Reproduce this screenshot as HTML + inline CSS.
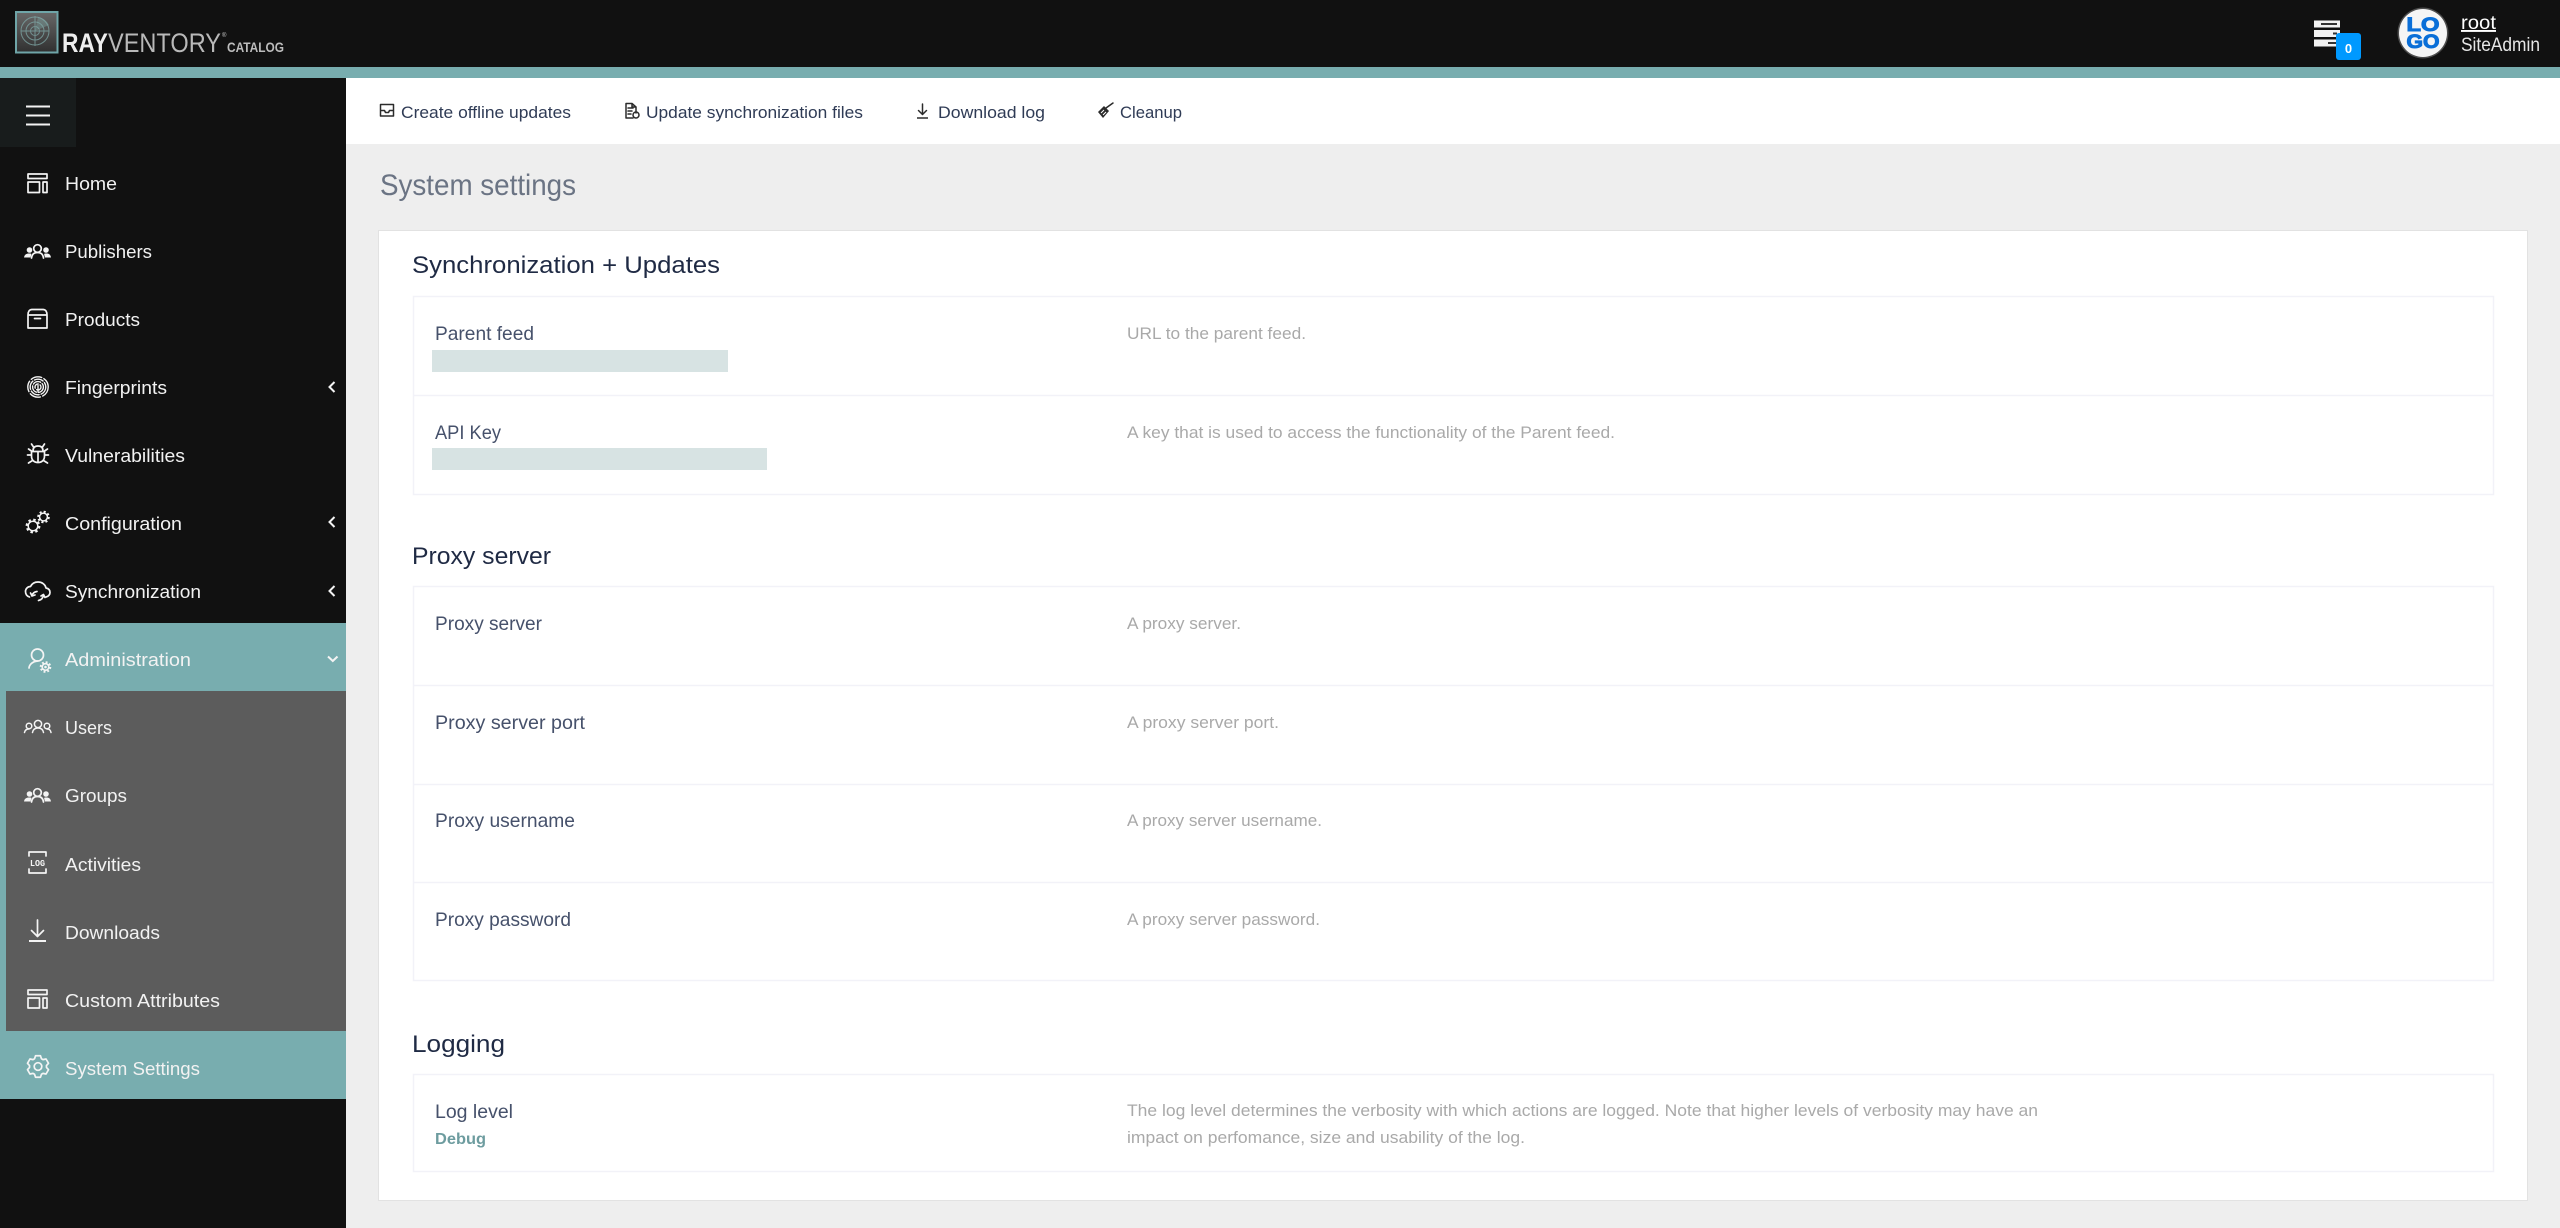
<!DOCTYPE html>
<html lang="en">
<head>
<meta charset="utf-8">
<title>System settings</title>
<style>
html,body{margin:0;padding:0;background:#eee;width:2560px;height:1228px;overflow:hidden}
svg{display:block}
text{font-family:"Liberation Sans",sans-serif}
.nav{font-size:18.5px;fill:#f2f2f2}
.tb{font-size:16.5px;fill:#2f3b55}
.h{font-size:24px;fill:#1f2a44}
.lb{font-size:19.5px;fill:#46516b}
.ds{font-size:16.5px;fill:#a9a9a9}
.ic{fill:none;stroke:#f4f4f4;stroke-width:1.7;stroke-linecap:round;stroke-linejoin:round}
.dk{fill:none;stroke:#2b2b2b;stroke-width:1.5;stroke-linecap:round;stroke-linejoin:round}
.box{fill:#fff;stroke:#f2f2f8;stroke-width:1.5}
.ln{stroke:#f2f2f8;stroke-width:1.5}
</style>
</head>
<body>
<svg xmlns="http://www.w3.org/2000/svg" width="2560" height="1228" viewBox="0 0 2560 1228">
<defs>
<path id="gear" vector-effect="non-scaling-stroke" d="M3.46 7.77L2.47 10.72L-2.47 10.72L-3.46 7.77L-5 6.88L-8.04 7.5L-10.52 3.22L-8.45 .89L-8.45 -.89L-10.52 -3.22L-8.04 -7.5L-5 -6.88L-3.46 -7.77L-2.47 -10.72L2.47 -10.72L3.46 -7.77L5 -6.88L8.04 -7.5L10.52 -3.22L8.45 -.89L8.45 .89L10.52 3.22L8.04 7.5L5 6.88Z"/>
<linearGradient id="lg" x1="0" y1="0" x2="0" y2="1"><stop offset="0" stop-color="#686868"/><stop offset="1" stop-color="#303030"/></linearGradient>
</defs>

<!-- backgrounds -->
<rect width="2560" height="1228" fill="#eeeeee"/>
<rect width="2560" height="67" fill="#111111"/>
<rect y="67" width="2560" height="11" fill="#78adaf"/>
<rect y="78" width="346" height="1150" fill="#111111"/>
<rect x="346" y="78" width="2214" height="66" fill="#ffffff"/>
<rect y="78" width="76" height="69" fill="#181c1c"/>
<rect y="623" width="346" height="68" fill="#78adaf"/>
<rect y="691" width="6" height="340" fill="#78adaf"/>
<rect x="6" y="691" width="340" height="340" fill="#5c5c5c"/>
<rect y="1031" width="346" height="68" fill="#78adaf"/>

<!-- logo -->
<rect x="16" y="12" width="41.500" height="40.500" fill="url(#lg)" stroke="#6fa5a8" stroke-width="2"/>
<g fill="none" stroke="#7fa9a8" stroke-width="1" opacity=".75">
<circle cx="35" cy="31" r="14"/><circle cx="35" cy="31" r="9"/><circle cx="35" cy="31" r="4.500"/>
<path d="M35 16V46M21 31H49"/>
</g>
<path d="M35 31L38 17A15 15 0 0 1 49 25Z" fill="#7fa9a8" opacity=".4"/>
<text x="62" y="52" font-size="27" font-weight="700" fill="#eeeeee" textLength="46" lengthAdjust="spacingAndGlyphs">RAY</text>
<text x="108" y="52" font-size="27" fill="#b9b9b9" textLength="113" lengthAdjust="spacingAndGlyphs">VENTORY</text>
<text x="222" y="37" font-size="6" fill="#cccccc">®</text>
<text x="227" y="52" font-size="13.500" font-weight="700" fill="#bdbdbd" textLength="57" lengthAdjust="spacingAndGlyphs">CATALOG</text>

<!-- hamburger -->
<path d="M26 106.500H50M26 115.500H50M26 124.500H50" stroke="#f4f4f4" stroke-width="2"/>

<!-- sidebar text -->
<text class="nav" x="65" y="190" textLength="52" lengthAdjust="spacingAndGlyphs">Home</text>
<text class="nav" x="65" y="258" textLength="87" lengthAdjust="spacingAndGlyphs">Publishers</text>
<text class="nav" x="65" y="326" textLength="75" lengthAdjust="spacingAndGlyphs">Products</text>
<text class="nav" x="65" y="394" textLength="102" lengthAdjust="spacingAndGlyphs">Fingerprints</text>
<text class="nav" x="65" y="462" textLength="120" lengthAdjust="spacingAndGlyphs">Vulnerabilities</text>
<text class="nav" x="65" y="530" textLength="117" lengthAdjust="spacingAndGlyphs">Configuration</text>
<text class="nav" x="65" y="598" textLength="136" lengthAdjust="spacingAndGlyphs">Synchronization</text>
<text class="nav" x="65" y="666" textLength="126" lengthAdjust="spacingAndGlyphs">Administration</text>
<text class="nav" x="65" y="734" textLength="47" lengthAdjust="spacingAndGlyphs">Users</text>
<text class="nav" x="65" y="802" textLength="62" lengthAdjust="spacingAndGlyphs">Groups</text>
<text class="nav" x="65" y="871" textLength="76" lengthAdjust="spacingAndGlyphs">Activities</text>
<text class="nav" x="65" y="939" textLength="95" lengthAdjust="spacingAndGlyphs">Downloads</text>
<text class="nav" x="65" y="1007" textLength="155" lengthAdjust="spacingAndGlyphs">Custom Attributes</text>
<text class="nav" x="65" y="1075" textLength="135" lengthAdjust="spacingAndGlyphs">System Settings</text>

<!-- chevrons -->
<path d="M334.500 382L329.500 387L334.500 392M334.500 517L329.500 522L334.500 527M334.500 586L329.500 591L334.500 596" fill="none" stroke="#f4f4f4" stroke-width="2"/>
<path d="M328 656.500L332.800 661L337.500 656.500" fill="none" stroke="#f4f4f4" stroke-width="2"/>

<!-- Home -->
<g class="ic">
<rect x="28" y="174" width="19" height="4.500"/><rect x="28" y="182" width="11.500" height="10.500"/><rect x="43" y="182" width="4" height="10.500"/>
</g>
<!-- Publishers -->
<g class="ic">
<circle cx="37.500" cy="248.500" r="3.800"/><path d="M31.500 258C32 254 34 252.500 37.500 252.500S43 254 43.500 258"/>
</g>
<g fill="#f4f4f4">
<circle cx="29.500" cy="250" r="2.800"/><path d="M24 257.500C24.500 254 27 253.500 29.500 253.500S31.500 254 30.500 257.500Z"/>
<circle cx="46" cy="250" r="2.800"/><path d="M51 257.500C50.500 254 48.500 253.500 46 253.500S44 254 45 257.500Z"/>
</g>
<!-- Products -->
<g class="ic">
<path d="M28 315V328H47V315C47 311.500 45.500 309.500 43 309.500H32C29.500 309.500 28 311.500 28 315ZM28 315H47M34.500 318.500H40.500"/>
</g>
<!-- Fingerprints -->
<g fill="none" stroke="#f4f4f4" stroke-width="1.400" stroke-linecap="round">
<circle cx="38" cy="387" r="10.200" stroke-dasharray="11 2.500"/>
<circle cx="38" cy="387" r="7.800" stroke-dasharray="9 2"/>
<circle cx="38" cy="387" r="5.400" stroke-dasharray="8 2"/>
<circle cx="38" cy="387" r="3" stroke-dasharray="6 2"/>
<path d="M38 385.500V392"/>
</g>
<!-- Vulnerabilities -->
<g class="ic">
<path d="M31.500 451.500H44.500V456C44.500 460 42 462.500 38 462.500S31.500 460 31.500 456ZM33 451C33 447.500 35 446 38 446S43 447.500 43 451M38 451.500V462.500M33.500 447L31.500 444M42.500 447L44.500 444M31.500 455H27.500M44.500 455H48.500M32.500 460.500L28.500 463M43.500 460.500L47.500 463M31.500 451L28.500 449M44.500 451L47.500 449"/>
</g>
<!-- Configuration -->
<g fill="none" stroke="#f4f4f4">
<circle cx="33" cy="526" r="4.800" stroke-width="1.500"/>
<circle cx="33" cy="526" r="6.300" stroke-width="2.200" stroke-dasharray="2.500 2.450"/>
<circle cx="43.500" cy="517" r="3.900" stroke-width="1.500"/>
<circle cx="43.500" cy="517" r="5.300" stroke-width="2" stroke-dasharray="2.100 2.060"/>
</g>
<!-- Synchronization -->
<g class="ic">
<path d="M29.500 597C26.500 596 25.500 593.500 25.500 591.500C25.500 588.500 28 586.500 30.500 586.500C32 583.500 35 582 38 582C42.500 582 45.500 585 46 588C48.500 588.500 50 590 50 592.500C50 594.500 48.500 596.500 46 597"/>
<path d="M32 595.500A6 6 0 0 1 37 591.500M30.500 593L32 596L35 595M43.500 595A6 6 0 0 1 38.500 600.500M45 597.500L43.500 594.500L41 596"/>
</g>
<!-- Administration -->
<g class="ic">
<circle cx="37.500" cy="655" r="6"/><path d="M29 668C29.500 664 33 661.500 37.500 661"/>
</g>
<g fill="none" stroke="#f4f4f4">
<circle cx="45.500" cy="667" r="3.300" stroke-width="1.600"/>
<circle cx="45.500" cy="667" r="4.800" stroke-width="2" stroke-dasharray="1.900 1.870"/>
</g>
<circle cx="45.500" cy="667" r="1.300" fill="#f4f4f4"/>
<!-- Users -->
<g fill="none" stroke="#f4f4f4" stroke-width="1.500" stroke-linecap="round">
<circle cx="38" cy="724" r="3.600"/><path d="M32.500 732.500C33 729.500 35 728 38 728S43 729.500 43.500 732.500"/>
<circle cx="29" cy="726" r="2.800"/><path d="M24.500 732.500C25 730 26.500 729 29 729"/>
<circle cx="47" cy="726" r="2.800"/><path d="M51 732.500C50.500 730 49.500 729 47 729"/>
</g>
<!-- Groups -->
<g class="ic">
<circle cx="37.500" cy="792.500" r="3.800"/><path d="M31.500 802C32 798 34 796.500 37.500 796.500S43 798 43.500 802"/>
</g>
<g fill="#f4f4f4">
<circle cx="29.500" cy="794" r="2.800"/><path d="M24 801.500C24.500 798 27 797.500 29.500 797.500S31.500 798 30.500 801.500Z"/>
<circle cx="46" cy="794" r="2.800"/><path d="M51 801.500C50.500 798 48.500 797.500 46 797.500S44 798 45 801.500Z"/>
</g>
<!-- Activities -->
<path class="ic" d="M29 856V852H46V856M29 869V873H46V869"/>
<text x="30" y="866" font-size="9" font-weight="700" fill="#f4f4f4" textLength="15" lengthAdjust="spacingAndGlyphs" style="font-family:'Liberation Mono',monospace">LOG</text>
<!-- Downloads -->
<path class="ic" d="M37.500 920V936M31.500 930.500L37.500 936.500L43.500 930.500"/>
<path d="M29 941H46" stroke="#f4f4f4" stroke-width="2"/>
<!-- Custom Attributes -->
<g class="ic">
<rect x="28" y="990" width="19" height="4.500"/><rect x="28" y="998" width="11.500" height="10"/><rect x="43" y="998" width="4" height="10"/>
</g>
<!-- System Settings -->
<g class="ic">
<use href="#gear" transform="translate(38 1066.500)"/>
<circle cx="38" cy="1066.500" r="3.800"/>
</g>

<!-- header right -->
<g>
<rect x="2314" y="20.500" width="26" height="7" fill="#f2f2f2"/><rect x="2321" y="23" width="16" height="2" fill="#333"/>
<rect x="2314" y="30" width="26" height="7" fill="#f2f2f2"/><rect x="2333" y="32.500" width="4" height="2" fill="#333"/>
<rect x="2314" y="39.500" width="26" height="7" fill="#f2f2f2"/><rect x="2328" y="42" width="9" height="2" fill="#333"/>
</g>
<rect x="2336" y="33" width="25" height="27" rx="3" fill="#0099ff"/>
<text x="2348.500" y="53" font-size="13" font-weight="700" fill="#fff" text-anchor="middle">0</text>
<circle cx="2423" cy="33" r="25.500" fill="#ffffff" opacity=".25"/>
<circle cx="2423" cy="33" r="24" fill="#f5f5f5"/>
<text x="2406.500" y="31" font-size="19.500" font-weight="700" fill="#0a6fd8" stroke="#0a6fd8" stroke-width="1" textLength="33" lengthAdjust="spacingAndGlyphs">LO</text>
<text x="2406.500" y="48" font-size="19.500" font-weight="700" fill="#0a6fd8" stroke="#0a6fd8" stroke-width="1" textLength="33" lengthAdjust="spacingAndGlyphs">GO</text>
<text x="2461" y="29" font-size="19" fill="#ffffff" text-decoration="underline" textLength="35" lengthAdjust="spacingAndGlyphs">root</text>
<text x="2461" y="51" font-size="19" fill="#e6e6e6" textLength="79" lengthAdjust="spacingAndGlyphs">SiteAdmin</text>

<!-- toolbar -->
<text class="tb" x="401" y="118" textLength="170" lengthAdjust="spacingAndGlyphs">Create offline updates</text>
<text class="tb" x="646" y="118" textLength="217" lengthAdjust="spacingAndGlyphs">Update synchronization files</text>
<text class="tb" x="938" y="118" textLength="107" lengthAdjust="spacingAndGlyphs">Download log</text>
<text class="tb" x="1120" y="118" textLength="62" lengthAdjust="spacingAndGlyphs">Cleanup</text>
<path class="dk" d="M380.500 104.500H393.500V116H380.500ZM380.500 110.500H384.500L385.500 112.500H388.500L389.500 110.500H393.500"/>
<path class="dk" d="M636 113V107L632 103.500H626V118H633M632 103.500V107H636M628 108H633M628 111H632M628 114H631"/>
<circle cx="636" cy="115" r="3" fill="none" stroke="#2b2b2b" stroke-width="1.500"/>
<path class="dk" d="M922.500 104V114M918.500 110.500L922.500 114.500L926.500 110.500"/>
<path d="M917 118H928" stroke="#2b2b2b" stroke-width="1.500"/>
<path class="dk" d="M1106 108L1113 103"/>
<path d="M1098 112L1104 106L1109 111L1103 118Z" fill="#2b2b2b"/>
<path d="M1101 113L1104 110M1103 115L1106 112" stroke="#fff" stroke-width="1"/>

<!-- page title -->
<text x="380" y="195" font-size="30" fill="#6b7484" textLength="196" lengthAdjust="spacingAndGlyphs">System settings</text>

<!-- card -->
<rect x="378.500" y="230.500" width="2149" height="970" fill="#ffffff" stroke="#e2e2e2" stroke-width="1"/>

<text class="h" x="412" y="273" textLength="308" lengthAdjust="spacingAndGlyphs">Synchronization + Updates</text>
<rect class="box" x="413.500" y="296.500" width="2080" height="198"/>
<path class="ln" d="M413 395.500H2494"/>
<text class="lb" x="435" y="340" textLength="99" lengthAdjust="spacingAndGlyphs">Parent feed</text>
<rect x="432" y="350" width="296" height="22" fill="#d7e3e3"/>
<text class="ds" x="1127" y="339" textLength="179" lengthAdjust="spacingAndGlyphs">URL to the parent feed.</text>
<text class="lb" x="435" y="439" textLength="66" lengthAdjust="spacingAndGlyphs">API Key</text>
<rect x="432" y="448" width="335" height="22" fill="#d7e3e3"/>
<text class="ds" x="1127" y="438" textLength="488" lengthAdjust="spacingAndGlyphs">A key that is used to access the functionality of the Parent feed.</text>

<text class="h" x="412" y="564" textLength="139" lengthAdjust="spacingAndGlyphs">Proxy server</text>
<rect class="box" x="413.500" y="586.500" width="2080" height="394"/>
<path class="ln" d="M413 685.500H2494M413 784.500H2494M413 882.500H2494"/>
<text class="lb" x="435" y="630" textLength="107" lengthAdjust="spacingAndGlyphs">Proxy server</text>
<text class="ds" x="1127" y="629" textLength="114" lengthAdjust="spacingAndGlyphs">A proxy server.</text>
<text class="lb" x="435" y="729" textLength="150" lengthAdjust="spacingAndGlyphs">Proxy server port</text>
<text class="ds" x="1127" y="728" textLength="152" lengthAdjust="spacingAndGlyphs">A proxy server port.</text>
<text class="lb" x="435" y="827" textLength="140" lengthAdjust="spacingAndGlyphs">Proxy username</text>
<text class="ds" x="1127" y="826" textLength="195" lengthAdjust="spacingAndGlyphs">A proxy server username.</text>
<text class="lb" x="435" y="926" textLength="136" lengthAdjust="spacingAndGlyphs">Proxy password</text>
<text class="ds" x="1127" y="925" textLength="193" lengthAdjust="spacingAndGlyphs">A proxy server password.</text>

<text class="h" x="412" y="1052" textLength="93" lengthAdjust="spacingAndGlyphs">Logging</text>
<rect class="box" x="413.500" y="1074.500" width="2080" height="97"/>
<text class="lb" x="435" y="1118" textLength="78" lengthAdjust="spacingAndGlyphs">Log level</text>
<text x="435" y="1144" font-size="16" font-weight="700" fill="#6d9c9f" textLength="51" lengthAdjust="spacingAndGlyphs">Debug</text>
<text class="ds" x="1127" y="1116" textLength="911" lengthAdjust="spacingAndGlyphs">The log level determines the verbosity with which actions are logged. Note that higher levels of verbosity may have an</text>
<text class="ds" x="1127" y="1143" textLength="398" lengthAdjust="spacingAndGlyphs">impact on perfomance, size and usability of the log.</text>
</svg>
</body>
</html>
